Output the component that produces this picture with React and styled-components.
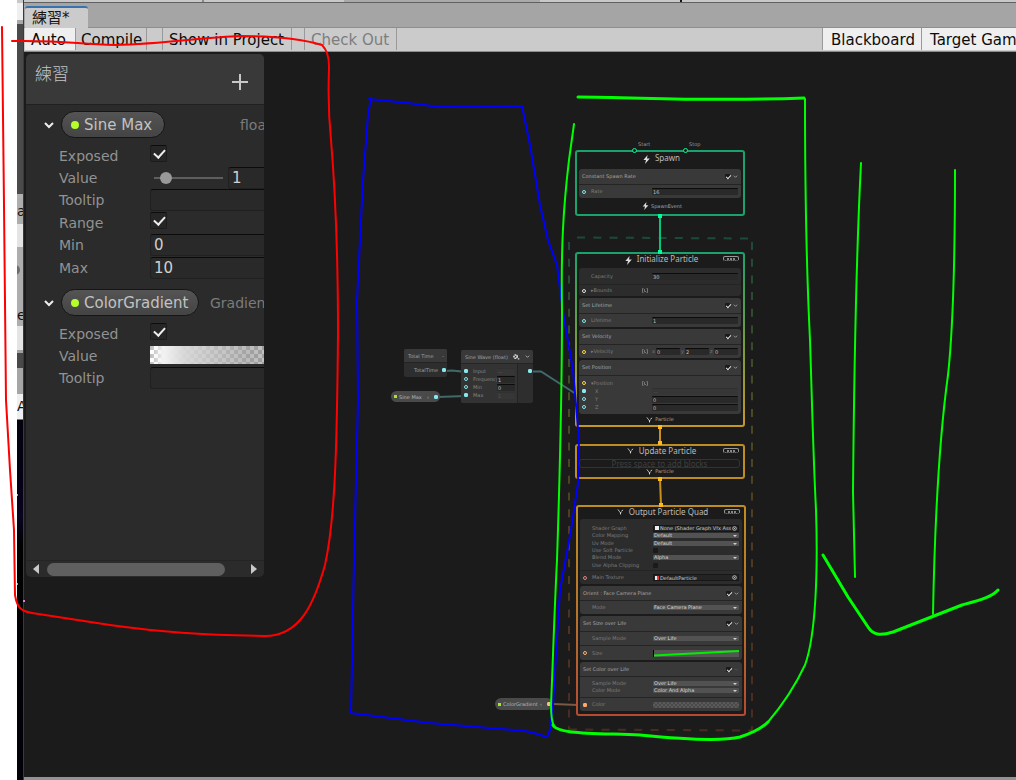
import React from "react";
import styled, { createGlobalStyle, css } from "styled-components";

const Global = createGlobalStyle`
  * { box-sizing: border-box; }
  body { margin: 0; background: #fff; overflow: hidden; font-family: "DejaVu Sans", "Noto Sans CJK TC", sans-serif; }
  button, input, select { font: inherit; color: inherit; margin: 0; padding: 0; border: 0; background: none; }
`;

/* ---------- page shell ---------- */
const Page = styled.div`
  position: relative;
  display: grid;
  grid-template-columns: 7px minmax(0, 1fr);
  height: 100vh;
  padding-left: 17px;
  overflow: hidden;
`;
const Strip = styled.aside`
  display: flex;
  flex-direction: column;
  overflow: hidden;
  font-size: 14px;
  color: #111;
  border-right: 1px solid #3a3a3a;
`;
const StripPart = styled.div`
  flex: ${(p) => (p.$h ? `0 0 ${p.$h}px` : "1")};
  background: ${(p) => p.$bg};
  line-height: ${(p) => p.$h}px;
  white-space: nowrap;
`;
const Knob = styled.i`
  display: block;
  width: 10px;
  height: 10px;
  margin: 9px 0 0 -7px;
  border-radius: 50%;
  background: #6c6c6c;
`;
const Window = styled.main`
  display: flex;
  flex-direction: column;
  min-width: 0;
`;
const WindowEdge = styled.div`
  display: flex;
  gap: 140px;
  padding-left: 178px;
  height: 3px;
  background: #c8c8c8;
  border-bottom: 1px solid #606060;
`;
const EdgeMark = styled.i`
  width: ${(p) => p.$w}px;
  height: 2px;
  background: ${(p) => p.$c};
`;
const TabBar = styled.div`
  display: flex;
  align-items: flex-end;
  height: 25px;
  padding-left: 1px;
  background: #a5a5a5;
  border-bottom: 1px solid #8e8e8e;
`;
const Tab = styled.button`
  height: 22px;
  width: 63px;
  padding-left: 7px !important;
  margin-bottom: -1px;
  text-align: left;
  font-size: 15px;
  line-height: 20px;
  color: #151515;
  background: #cbcbcb !important;
  border-top: 2px solid #3a72b0 !important;
  border-radius: 3px 3px 0 0;
`;
const Toolbar = styled.div`
  display: flex;
  height: 24px;
  padding-left: 1px;
  background: #cbcbcb;
  border-bottom: 1px solid #8c8c8c;
  font-size: 15px;
`;
const ToolButton = styled.button`
  flex: none;
  width: ${(p) => p.$w}px;
  height: 22px;
  margin-right: ${(p) => p.$gap || 0}px !important;
  padding-left: ${(p) => p.$pad || 6}px !important;
  padding-top: 2px !important;
  overflow: hidden;
  text-align: left;
  white-space: nowrap;
  line-height: 20px;
  color: ${(p) => (p.disabled ? "#7d7d7d" : "#0c0c0c")} !important;
  background: ${(p) => (p.$on ? "#efefef" : "#cbcbcb")} !important;
  border-left: ${(p) => (p.$first ? 0 : 1)}px solid #999 !important;
  border-right: ${(p) => (p.$gap ? 1 : 0)}px solid #999 !important;
`;
const Spacer = styled.div`
  flex: 1;
`;
const Canvas = styled.section`
  position: relative;
  flex: 1;
  overflow: hidden;
  background: #1b1b1b;
  border-bottom: 3px solid #939393;
`;

/* ---------- blackboard ---------- */
const Board = styled.aside`
  position: absolute;
  left: 2px;
  top: 2px;
  width: 238px;
  height: 523px;
  display: flex;
  flex-direction: column;
  overflow: hidden;
  border-radius: 5px;
  background: #2b2b2b;
  color: #929292;
  font-size: 14px;
`;
const BoardHead = styled.header`
  display: flex;
  justify-content: space-between;
  height: 51px;
  padding: 7px 15px 0 9px;
  background: #393939;
  border-bottom: 1px solid #202020;
`;
const BoardTitle = styled.h2`
  margin: 0;
  font: 300 17px/24px "Noto Sans CJK TC", sans-serif;
  color: #c4c4c4;
`;
const AddButton = styled.button`
  width: 18px;
  height: 18px;
  margin-top: 12px !important;
`;
const Properties = styled.div`
  flex: 1;
  overflow: hidden;
  display: flex;
  flex-direction: column;
  gap: 4px;
`;
const PropHead = styled.div`
  display: flex;
  align-items: center;
  padding: 6px 0 7px 17px;
  white-space: nowrap;
`;
const Fold = styled.button`
  flex: none;
  width: 12px;
  height: 12px;
  margin-right: 6px !important;
  line-height: 0;
`;
const Chip = styled.span`
  display: flex;
  flex: none;
  align-items: center;
  gap: 5px;
  width: ${(p) => p.$w}px;
  height: 27px;
  padding-left: 9px;
  border: 1px solid #161616;
  border-radius: 14px;
  background: linear-gradient(#545454, #444);
  color: #c2c2c2;
  font-size: 15px;
  &::before {
    content: "";
    width: 8px;
    height: 8px;
    border-radius: 50%;
    background: #b4ff2b;
  }
`;
const PropType = styled.span`
  flex: none;
  margin-left: ${(p) => p.$gap}px;
  color: #7b7b7b;
`;
const PropRow = styled.div`
  display: grid;
  grid-template-columns: 91px 1fr;
  padding-left: 33px;
  height: ${(p) => (p.$tall ? 23 : 22)}px;
  line-height: 22px;
`;
const Check = styled.input.attrs({ type: "checkbox" })`
  appearance: none;
  position: relative;
  width: 17px;
  height: 17px;
  background: #262626 !important;
  border: 1px solid #1c1c1c !important;
  border-top-color: #0d0d0d !important;
  border-radius: 2px;
  &:checked::before {
    content: "";
    position: absolute;
    left: 5px;
    top: 1px;
    width: 5px;
    height: 9px;
    border: solid #eee;
    border-width: 0 2px 2px 0;
    transform: rotate(42deg);
  }
`;
const TextField = styled.input`
  width: 100%;
  height: 22px;
  padding-left: 3px !important;
  background: #292929 !important;
  border: 1px solid #202020 !important;
  border-top-color: #0b0b0b !important;
  border-right: 0 !important;
  border-radius: 3px 0 0 3px;
  color: #d0d0d0;
  font-size: 15px !important;
`;
const SliderCell = styled.div`
  display: grid;
  grid-template-columns: 69px 1fr;
  gap: 5px;
  padding-left: 4px;
  align-items: center;
`;
const Slider = styled.input.attrs({ type: "range" })`
  appearance: none;
  width: 69px;
  height: 12px;
  background: linear-gradient(#5e5e5e, #5e5e5e) center / 100% 2px no-repeat !important;
  &::-webkit-slider-thumb {
    appearance: none;
    width: 12px;
    height: 12px;
    border-radius: 50%;
    background: #999;
  }
`;
const checker = css`
  background:
    linear-gradient(90deg, ${(p) => p.$fade}),
    repeating-conic-gradient(${(p) => p.$tiles}) 0 0 / ${(p) => p.$size}px ${(p) => p.$size}px;
`;
const GradientField = styled.button`
  height: 18px;
  margin-top: 1px !important;
  width: 100%;
  && { ${checker} }
`;
const ScrollBar = styled.div`
  display: flex;
  align-items: center;
  justify-content: space-between;
  height: 17px;
  padding: 0 7px;
  border-top: 1px solid #242424;
`;
const Arrow = styled.button`
  width: 6px;
  height: 10px;
  background: #c9c9c9 !important;
  clip-path: ${(p) => (p.$right ? "polygon(0 0, 100% 50%, 0 100%)" : "polygon(100% 0, 0 50%, 100% 100%)")};
`;
const Track = styled.div`
  flex: 1;
  padding: 0 26px 0 8px;
`;
const Thumb = styled.div`
  height: 13px;
  border-radius: 7px;
  background: #5f5f5f;
`;

/* ---------- graph ---------- */
const Wires = styled.svg`
  position: absolute;
  left: 0;
  top: 0;
  pointer-events: none;
`;
const Marks = styled.svg`
  position: absolute;
  left: 0;
  top: 0;
  pointer-events: none;
`;
const Context = styled.article`
  position: absolute;
  left: ${(p) => p.$x}px;
  top: ${(p) => p.$y}px;
  width: 170px;
  padding: 2px;
  border-radius: 3px;
  background: ${(p) => p.$edge};
  font-size: 5px;
  color: #a5a5a5;
`;
const ContextBody = styled.div`
  display: flex;
  flex-direction: column;
  height: ${(p) => p.$h}px;
  padding: 0 2px;
  border-radius: 1px;
  background: #1b1b1b;
`;
const ContextTitle = styled.h3`
  position: relative;
  display: flex;
  align-items: flex-start;
  justify-content: center;
  gap: 5px;
  height: ${(p) => p.$h}px;
  padding: ${(p) => p.$pad || 0}px 0 0 3px;
  margin: 0;
  font: 400 8px/10px "Noto Sans", sans-serif;
  color: #bcbcbc;
  & > svg { margin-top: 2px; }
`;
const Badge = styled.span`
  position: absolute;
  right: 2px;
  top: 2px;
  width: 16px;
  height: 5px;
  border: 1px solid #989898;
  border-bottom-style: dotted;
  border-radius: 2px;
  background: linear-gradient(90deg, #888 2px, transparent 2px 3px, #888 3px 5px, transparent 5px 6px, #888 6px) center / 8px 2px no-repeat;
`;
const ContextFoot = styled.footer`
  display: flex;
  flex: 1;
  align-items: center;
  justify-content: center;
  gap: 2px;
  line-height: 7px;
  padding-bottom: 2px;
  padding-left: ${(p) => (p.$shift ? 4 : 0)}px;
`;
const Block = styled.section`
  margin-bottom: 2px;
  border-radius: 3px;
  background: ${(p) => (p.$dim ? "#2c2c2c" : "#393939")};
`;
const BlockHead = styled.header`
  display: flex;
  align-items: center;
  gap: 3px;
  height: ${(p) => p.$h || 14}px;
  padding: 0 3px;
  line-height: 7px;
  & > span { flex: 1; }
`;
const Group = styled.div`
  padding: ${(p) => p.$pad || 0}px 0 ${(p) => p.$end ?? p.$pad ?? 0}px;
  border-top: ${(p) => (p.$line ? 1 : 0)}px solid #242424;
`;
const Field = styled.div`
  display: grid;
  grid-template-columns: 12px 61px minmax(0, 1fr);
  align-items: center;
  height: ${(p) => p.$h}px;
  padding-right: 3px;
  line-height: 7px;
`;
const FieldLabel = styled.label`
  display: flex;
  align-items: center;
  justify-content: space-between;
  padding-right: 4px;
  padding-left: ${(p) => (p.$sub ? 4 : 0)}px;
  color: #7d7d7d;
  white-space: nowrap;
`;
const Port = styled.i`
  width: 4px;
  height: 4px;
  margin-left: 3px;
  border: 1px solid ${(p) => p.$c};
  border-radius: ${(p) => (p.$solid ? 1 : 2)}px;
  background: ${(p) => (p.$solid ? p.$c : "transparent")};
`;
const MiniInput = styled.input`
  width: 100%;
  min-width: 0;
  height: 7px;
  padding-left: 1px !important;
  background: ${(p) => (p.disabled ? "#363636" : "#292929")} !important;
  border-top: 1px solid ${(p) => (p.disabled ? "#303030" : "#0c0c0c")} !important;
  border-radius: 1px;
  color: ${(p) => (p.disabled ? "#555" : "#c0c0c0")} !important;
  line-height: 6px;
`;
const MiniCheck = styled.input.attrs({ type: "checkbox" })`
  appearance: none;
  position: relative;
  width: 5px;
  height: 5px;
  background: #1a1a1a !important;
  border-radius: 1px;
  &:checked::before {
    content: "";
    position: absolute;
    left: 2px;
    top: 0;
    width: 2px;
    height: 4px;
    border: solid #e5e5e5;
    border-width: 0 1px 1px 0;
    transform: rotate(42deg);
  }
`;
const SelectWrap = styled.span`
  position: relative;
  display: block;
  height: 5px;
  border-radius: 1px;
  background: #525252;
  color: #dadada;
  &::after {
    content: "";
    position: absolute;
    right: 2px;
    top: 2px;
    border: solid transparent;
    border-width: 2px 2px 0;
    border-top-color: #d0d0d0;
  }
`;
const MiniSelect = styled.select`
  appearance: none;
  display: block;
  width: 100%;
  height: 5px;
  padding-left: 1px !important;
  line-height: 5px;
`;
const ObjectField = styled.button`
  display: flex;
  align-items: center;
  gap: 1px;
  height: 7px;
  padding: 0 1px !important;
  overflow: hidden;
  background: #242424 !important;
  border: 1px solid #171717 !important;
  color: #cfcfcf !important;
  line-height: 6px;
  white-space: nowrap;
  & > span { flex: 1; overflow: hidden; text-align: left; }
  & > svg { flex: none; }
`;
const FileMark = styled.i`
  flex: none;
  width: 4px;
  height: 4px;
  background: #eee;
  border-right: ${(p) => (p.$red ? 2 : 0)}px solid #e33;
`;
const Vector = styled.div`
  display: grid;
  grid-template-columns: repeat(3, 3px 1fr);
  gap: 0 1px;
  color: #777;
`;
const Ramp = styled.button`
  height: 6px;
  && { ${checker} }
`;
const Curve = styled.svg`
  display: block;
  width: 100%;
  height: 7px;
  background: #555;
  border-left: 1px solid #000;
`;
const EmptyHint = styled.div`
  height: 9px;
  margin-right: 1px;
  border: 1px solid #333;
  border-radius: 3px;
  text-align: center;
  font: 8px/7px "Noto Sans", sans-serif;
  color: #3f3f3f;
`;
const FlowLabel = styled.span`
  position: absolute;
  left: ${(p) => p.$x}px;
  top: 89px;
  font-size: 5px;
  line-height: 7px;
  color: #999;
`;
const Operator = styled.article`
  position: absolute;
  left: ${(p) => p.$x}px;
  top: ${(p) => p.$y}px;
  width: ${(p) => p.$w}px;
  border-radius: 2px;
  overflow: hidden;
  background: #2e2e2e;
  font-size: 5px;
  line-height: 8px;
  color: #a0a0a0;
`;
const OperatorHead = styled.header`
  display: flex;
  align-items: center;
  justify-content: space-between;
  height: 14px;
  padding: 0 3px 0 4px;
  background: #393939;
  border-bottom: 1px solid #242424;
`;
const OutputRow = styled.div`
  display: flex;
  align-items: center;
  justify-content: flex-end;
  gap: 1px;
  height: 14px;
  padding-right: 1px;
`;
const OperatorBody = styled.div`
  display: grid;
  grid-template-columns: 57px 1fr;
  height: 39px;
`;
const Inputs = styled.div`
  padding: 3px 3px 0 0;
  background: #333;
  border-right: 1px solid #242424;
`;
const InputRow = styled.div`
  display: grid;
  grid-template-columns: 12px 24px 18px;
  align-items: center;
  height: 8px;
  color: #858585;
  & > label { overflow: hidden; }
`;
const Pill = styled.div`
  position: absolute;
  left: ${(p) => p.$x}px;
  top: ${(p) => p.$y}px;
  width: ${(p) => p.$w}px;
  height: ${(p) => p.$h}px;
  display: flex;
  align-items: center;
  gap: 2px;
  padding: 0 2px 0 3px;
  border-radius: 6px;
  background: #4a4a4a;
  font-size: 5px;
  line-height: 8px;
  color: #b5b5b5;
  & > span { flex: 1; }
  &::before {
    content: "";
    width: 3px;
    height: 3px;
    background: #a4e62a;
  }
`;

const CYAN = "#84e8ec";

const Chevron = ({ size = 12, color = "#eee" }) => (
  <svg width={size} height={size} viewBox="0 0 12 12" fill="none" stroke={color} strokeWidth="2">
    <path d="M2 4 L6 8 L10 4" />
  </svg>
);
const Bolt = ({ size = 9 }) => (
  <svg width="7" height={size} viewBox="0 0 7 9" fill="#ddd">
    <path d="M4.6 0 L0.4 5 H3 L2 9 L6.8 3.6 H4 Z" />
  </svg>
);
const Spray = () => (
  <svg width="7" height="6" viewBox="0 0 7 6" fill="none" stroke="#ddd" strokeWidth="1">
    <path d="M1 .5 L3.5 4 L6 .5 M3.5 3.5 V6" strokeDasharray="1.6 .6" />
  </svg>
);
const Space = () => (
  <svg width="6" height="5" viewBox="0 0 6 5" fill="none" stroke="#777" strokeWidth="1">
    <path d="M1.5 .5 H.5 V4.5 H1.5 M4.5 .5 H5.5 V4.5 H4.5 M2.5 1 V3.5 H4" />
  </svg>
);
const Target = () => (
  <svg width="5" height="5" viewBox="0 0 5 5" fill="none" stroke="#bbb" strokeWidth="1">
    <circle cx="2.5" cy="2.5" r="1.8" />
    <path d="M2.5 2 V3" />
  </svg>
);
const Gear = () => (
  <svg width="7" height="6" viewBox="0 0 7 6">
    <circle cx="2.6" cy="2.6" r="1.6" fill="none" stroke="#ddd" strokeWidth="1.6" strokeDasharray="1.5 .4" />
    <circle cx="5.6" cy="4.8" r=".9" fill="#bbb" />
  </svg>
);

const Header = ({ name, faded, h }) => (
  <BlockHead $h={h}>
    <span>{name}</span>
    <MiniCheck defaultChecked aria-label={`${name} enabled`} />
    <Chevron size={5} color={faded ? "#555" : "#aaa"} />
  </BlockHead>
);

const Row = ({ id, label, port, solid, h = 14, sub, space, arrow, children }) => (
  <Field $h={h}>
    {port ? <Port $c={port} $solid={solid} /> : <span />}
    <FieldLabel htmlFor={id} $sub={sub}>
      <span>{arrow}{label}</span>
      {space && <Space />}
    </FieldLabel>
    {children || <span />}
  </Field>
);

const Pick = ({ id, value }) => (
  <SelectWrap>
    <MiniSelect id={id} defaultValue={value}>
      <option>{value}</option>
    </MiniSelect>
  </SelectWrap>
);

const STRIP = [
  [3, "#c8c8c8"], [17, "#efefef"], [4, "#a8a8a8"], [170, "#4a4a4a"], [4, "#b0b0b0"],
  [26, "#adadad", "a"], [23, "#e4e4e4"], [9, "#adadad"], [48, "#adadad", "", true],
  [22, "#adadad", "e"], [24, "#e4e4e4"], [3, "#a0a0a0"], [15, "#484848"],
  [26, "#a5a5a5"], [25, "#efefef", "A"], [1, "#777"], [0, "linear-gradient(#03030d, #070018 20%, #0a0420 27%, #000 35%, #010108)"],
];

const Blackboard = () => (
  <Board>
    <BoardHead>
      <BoardTitle>練習</BoardTitle>
      <AddButton aria-label="Add property">
        <svg width="18" height="18" viewBox="0 0 18 18" stroke="#c8c8c8" strokeWidth="2">
          <path d="M9 1 V17 M1 9 H17" />
        </svg>
      </AddButton>
    </BoardHead>
    <Properties>
      <section>
        <PropHead>
          <Fold aria-label="Fold Sine Max"><Chevron /></Fold>
          <Chip $w={104}>Sine Max</Chip>
          <PropType $gap={75}>float</PropType>
        </PropHead>
        <PropRow><label htmlFor="sm-exp">Exposed</label><Check id="sm-exp" defaultChecked /></PropRow>
        <PropRow>
          <label htmlFor="sm-val">Value</label>
          <SliderCell>
            <Slider id="sm-val" min="0" max="10" defaultValue="1" />
            <TextField aria-label="Value number" defaultValue="1" />
          </SliderCell>
        </PropRow>
        <PropRow $tall><label htmlFor="sm-tip">Tooltip</label><TextField id="sm-tip" /></PropRow>
        <PropRow><label htmlFor="sm-range">Range</label><Check id="sm-range" defaultChecked /></PropRow>
        <PropRow $tall><label htmlFor="sm-min">Min</label><TextField id="sm-min" defaultValue="0" /></PropRow>
        <PropRow><label htmlFor="sm-max">Max</label><TextField id="sm-max" defaultValue="10" /></PropRow>
      </section>
      <section>
        <PropHead>
          <Fold aria-label="Fold ColorGradient"><Chevron /></Fold>
          <Chip $w={138}>ColorGradient</Chip>
          <PropType $gap={11}>Gradient</PropType>
        </PropHead>
        <PropRow><label htmlFor="cg-exp">Exposed</label><Check id="cg-exp" defaultChecked /></PropRow>
        <PropRow>
          <label htmlFor="cg-val">Value</label>
          <GradientField
            id="cg-val"
            aria-label="Edit gradient"
            $size={8}
            $tiles="#fff 0 25%, #bbb 0 50%"
            $fade="rgba(255,255,255,0), #f2f2f2 12%, rgba(215,215,215,.95) 30%, rgba(150,150,150,.65) 85%, rgba(120,120,120,.45)"
          />
        </PropRow>
        <PropRow $tall><label htmlFor="cg-tip">Tooltip</label><TextField id="cg-tip" /></PropRow>
      </section>
    </Properties>
    <ScrollBar>
      <Arrow aria-label="Scroll left" />
      <Track><Thumb /></Track>
      <Arrow $right aria-label="Scroll right" />
    </ScrollBar>
  </Board>
);

const Graph = () => (
  <>
    <Wires width="992" height="725" viewBox="24 52 992 725" fill="none">
      <defs>
        <linearGradient id="sys" gradientUnits="userSpaceOnUse" x1="0" y1="237" x2="0" y2="730">
          <stop offset="0" stopColor="#1c4a3a" />
          <stop offset=".35" stopColor="#4a4a22" />
          <stop offset=".6" stopColor="#4f3b20" />
          <stop offset="1" stopColor="#4b2a20" />
        </linearGradient>
      </defs>
      <g stroke="url(#sys)" strokeWidth="2">
        <path d="M569 242 V730 M752 242 V730" strokeDasharray="8 8.7" />
        <path d="M577 237.500 L752 238.500 M569 729.500 L752 730.500" strokeDasharray="8 8.300" />
      </g>
      <g stroke="#41696b" strokeWidth="2">
        <path d="M444 371 L452 370.500 L466 372 M437 397 L466 396 M532 371.500 H541 L576 394" />
      </g>
      <path d="M553 704 L578 705" stroke="#7a5a45" strokeWidth="2" />
    </Wires>

    <FlowLabel $x={614}>Start</FlowLabel>
    <FlowLabel $x={665}>Stop</FlowLabel>

    <Context $x={551} $y={98} $edge="#1aa26c">
      <ContextBody $h={62}>
        <ContextTitle $h={17} $pad={1}><Bolt />Spawn</ContextTitle>
        <Block>
          <Header name="Constant Spawn Rate" h={15} />
          <Group $line>
            <Row id="rate" label="Rate" port={CYAN} h={13}><MiniInput id="rate" defaultValue="16" /></Row>
          </Group>
        </Block>
        <ContextFoot $shift><Bolt size={8} />SpawnEvent</ContextFoot>
      </ContextBody>
    </Context>

    <Context $x={551} $y={200} $edge="linear-gradient(#1aa26c, #7c9c3c 55%, #c4962a)">
      <ContextBody $h={171}>
        <ContextTitle $h={15}><Bolt />Initialize Particle<Badge /></ContextTitle>
        <Block $dim>
          <Group $pad={1} $end={0}><Row id="cap" label="Capacity" h={15}><MiniInput id="cap" defaultValue="30" /></Row></Group>
          <Group $line><Row label="Bounds" port="#ddd" h={11} arrow="▸" space /></Group>
        </Block>
        <Block>
          <Header name="Set Lifetime" h={15} />
          <Group $line><Row id="life" label="Lifetime" port={CYAN} h={13}><MiniInput id="life" defaultValue="1" /></Row></Group>
        </Block>
        <Block>
          <Header name="Set Velocity" h={15} />
          <Group $line>
            <Row id="vx" label="Velocity" port="#ffd84a" arrow="▸" h={13} space>
              <Vector>
                <span>x</span><MiniInput id="vx" defaultValue="0" />
                <span>y</span><MiniInput aria-label="Velocity y" defaultValue="2" />
                <span>z</span><MiniInput aria-label="Velocity z" defaultValue="0" />
              </Vector>
            </Row>
          </Group>
        </Block>
        <Block>
          <Header name="Set Position" h={15} />
          <Group $line $pad={3}>
            <Row label="Position" port="#ffd84a" arrow="▾" h={8} space />
            <Row id="px" label="X" port={CYAN} solid h={8} sub><MiniInput id="px" disabled defaultValue="—" /></Row>
            <Row id="py" label="Y" port={CYAN} h={8} sub><MiniInput id="py" defaultValue="0" /></Row>
            <Row id="pz" label="Z" port={CYAN} h={8} sub><MiniInput id="pz" defaultValue="0" /></Row>
          </Group>
        </Block>
        <ContextFoot><Spray />Particle</ContextFoot>
      </ContextBody>
    </Context>

    <Context $x={551} $y={392} $edge="#bd8d22">
      <ContextBody $h={31}>
        <ContextTitle $h={13}><Spray />Update Particle<Badge /></ContextTitle>
        <EmptyHint>Press space to add blocks</EmptyHint>
        <ContextFoot><Spray />Particle</ContextFoot>
      </ContextBody>
    </Context>

    <Context $x={552} $y={453} $edge="linear-gradient(#bd8d22, #b9742a 50%, #b54a32)">
      <ContextBody $h={207}>
        <ContextTitle $h={12}><Spray />Output Particle Quad<Badge /></ContextTitle>
        <Block $dim>
          <Group $pad={5} $end={1}>
            <Row id="sg" label="Shader Graph" h={8}>
              <ObjectField id="sg"><FileMark /><span>None (Shader Graph Vfx Asset)</span><Target /></ObjectField>
            </Row>
            <Row id="cm" label="Color Mapping" h={7}><Pick id="cm" value="Default" /></Row>
            <Row id="uv" label="Uv Mode" h={8}><Pick id="uv" value="Default" /></Row>
            <Row id="soft" label="Use Soft Particle" h={7}><MiniCheck id="soft" /></Row>
            <Row id="blend" label="Blend Mode" h={7}><Pick id="blend" value="Alpha" /></Row>
            <Row id="clip" label="Use Alpha Clipping" h={8}><MiniCheck id="clip" /></Row>
          </Group>
          <Group $line>
            <Row id="tex" label="Main Texture" port="#e88080" h={13}>
              <ObjectField id="tex"><FileMark $red /><span>DefaultParticle</span><Target /></ObjectField>
            </Row>
          </Group>
        </Block>
        <Block>
          <Header name="Orient : Face Camera Plane" />
          <Group $line><Row id="mode" label="Mode" h={13}><Pick id="mode" value="Face Camera Plane" /></Row></Group>
        </Block>
        <Block>
          <Header name="Set Size over Life" h={15} />
          <Group $line><Row id="sm1" label="Sample Mode" h={13}><Pick id="sm1" value="Over Life" /></Row></Group>
          <Group $line>
            <Row label="Size" port="#ffb070">
              <Curve viewBox="0 0 84 7" preserveAspectRatio="none">
                <path d="M0 5.500 L84 1" fill="none" stroke="#00f000" strokeWidth="2" />
              </Curve>
            </Row>
          </Group>
        </Block>
        <Block>
          <Header name="Set Color over Life" faded />
          <Group $line $pad={3}>
            <Row id="sm2" label="Sample Mode" h={7}><Pick id="sm2" value="Over Life" /></Row>
            <Row id="cmo" label="Color Mode" h={7}><Pick id="cmo" value="Color And Alpha" /></Row>
          </Group>
          <Group $line>
            <Row id="col" label="Color" port="#ffa868" solid h={13}>
              <Ramp id="col" aria-label="Edit color gradient" $size={4} $tiles="#5a5a5a 0 25%, #4a4a4a 0 50%" $fade="transparent, transparent" />
            </Row>
          </Group>
        </Block>
      </ContextBody>
    </Context>

    <Operator $x={380} $y={297} $w={43}>
      <OperatorHead><span>Total Time</span><span>-</span></OperatorHead>
      <OutputRow>TotalTime<Port $c={CYAN} $solid /></OutputRow>
    </Operator>

    <Operator $x={437} $y={298} $w={72}>
      <OperatorHead><span>Sine Wave (float)</span><Gear /><Chevron size={5} color="#bbb" /></OperatorHead>
      <OperatorBody>
        <Inputs>
          <InputRow><Port $c={CYAN} $solid /><label htmlFor="s-in">Input</label><MiniInput id="s-in" disabled defaultValue="—" /></InputRow>
          <InputRow><Port $c={CYAN} /><label htmlFor="s-fr">Frequency</label><MiniInput id="s-fr" defaultValue="1" /></InputRow>
          <InputRow><Port $c={CYAN} /><label htmlFor="s-mn">Min</label><MiniInput id="s-mn" defaultValue="0" /></InputRow>
          <InputRow><Port $c={CYAN} $solid /><label htmlFor="s-mx">Max</label><MiniInput id="s-mx" disabled defaultValue="1" /></InputRow>
        </Inputs>
        <OutputRow><Port $c={CYAN} $solid /></OutputRow>
      </OperatorBody>
    </Operator>

    <Pill $x={367} $y={339} $w={49} $h={11}><span>Sine Max</span>‹<Port $c={CYAN} $solid /></Pill>
    <Pill $x={471} $y={646} $w={58} $h={12}><span>ColorGradient</span>‹<Port $c="#ffb58a" $solid /></Pill>

    <Wires width="992" height="725" viewBox="24 52 992 725" fill="none">
      <path d="M660 216 V252" stroke="#00c878" strokeWidth="2" />
      <path d="M660 427 V444 M660 479 L661 505" stroke="#c8901e" strokeWidth="2" />
      <g fill="#00ff95">
        <path d="M658 214 h4 v4 h-4 z M658 250 h4 v4 h-4 z" />
      </g>
      <g fill="#ffb81f">
        <path d="M658 425 h4 v4 h-4 z M658 441 h4 v4 h-4 z M658 477 h4 v4 h-4 z M659 503 h4 v4 h-4 z" />
      </g>
      <g fill="#1b1b1b" stroke="#00ff95" strokeWidth="1">
        <circle cx="634.5" cy="150.5" r="2" />
        <circle cx="685.5" cy="150.5" r="2" />
      </g>
    </Wires>
  </>
);

const Annotations = () => (
  <Marks width="1016" height="780" viewBox="0 0 1016 780" fill="none" strokeLinecap="round" strokeLinejoin="round">
    <g fill="#e87ae8">
      <path d="M17 494 h1 v2 h-1 z M17 583 h1 v2 h-1 z M23 600 h2 v2 h-2 z" />
    </g>
    <path
      stroke="#ff0000"
      strokeWidth="2"
      d="M2 27 L4 205 L6 400 L10 470 L14 530 L15 595 C17 607 20 611 32 613 L110 625 C160 632 200 635 265 636 C300 636 314 604 325 565 C335 520 337 450 338 333 C338 260 336 200 331 140 C327 100 329 80 329 66 C329 52 324 47 322 45 C300 38 270 36 240 36 C205 37 165 44 115 45 C75 44 65 40 12 41"
    />
    <path
      stroke="#0000ff"
      strokeWidth="2"
      d="M369 99 L408 103 L440 107 L522 106 L530 145 L540 205 L548 240 L557 265 L563 312 L573 370 L579 440 L578 483 L571 530 L560 590 L556 655 L553 706 L550 730 L547 737 L534 733 L525 731 L430 723 L351 713 L354 560 L358 400 L357 300 L363 180 L368 115 L371 98"
    />
    <path
      stroke="#00ff00"
      strokeWidth="2"
      d="M574 124 L569 160 C563 210 561 250 562 310 C562 400 560 470 557 560 C554 620 553 660 551 705 C551 718 552 722 554 726 M768 722 C785 702 797 682 805 665 C816 635 818 570 816 510 C813 450 812 400 810 340 C807 280 805 200 805 99 M861 163 C857 240 854 380 853 492 L855 577 M955 170 C955 270 953 330 948 375 C939 440 935 510 933 614"
    />
    <path
      stroke="#00ff00"
      strokeWidth="3"
      d="M578 97 C640 97 700 102 804 98 M553 725 C557 734 590 733 640 735 C680 739 720 742 740 737 C753 733 762 728 768 722 M823 555 L848 597 L868 627 C873 635 880 636 893 632 L962 605 C980 600 992 597 998 590"
    />
  </Marks>
);

export default function App() {
  return (
    <Page>
      <Global />
      <Strip>
        {STRIP.map(([h, bg, text, knob], i) => (
          <StripPart key={i} $h={h} $bg={bg}>{knob ? <Knob /> : text}</StripPart>
        ))}
      </Strip>
      <Window>
        <WindowEdge>
          <EdgeMark $w={2} $c="#888" />
          <EdgeMark $w={196} $c="#aaa" />
          <EdgeMark $w={2} $c="#111" />
        </WindowEdge>
        <TabBar><Tab>練習*</Tab></TabBar>
        <Toolbar>
          <ToolButton $w={50} $on $first>Auto</ToolButton>
          <ToolButton $w={72} $pad={5} $gap={15}>Compile</ToolButton>
          <ToolButton $w={130} $gap={12}>Show in Project</ToolButton>
          <ToolButton $w={93} $gap={1} disabled>Check Out</ToolButton>
          <Spacer />
          <ToolButton $w={99} $pad={8} $on>Blackboard</ToolButton>
          <ToolButton $w={95} $pad={8} $on>Target GameObject</ToolButton>
        </Toolbar>
        <Canvas>
          <Graph />
          <Blackboard />
        </Canvas>
      </Window>
      <Annotations />
    </Page>
  );
}
